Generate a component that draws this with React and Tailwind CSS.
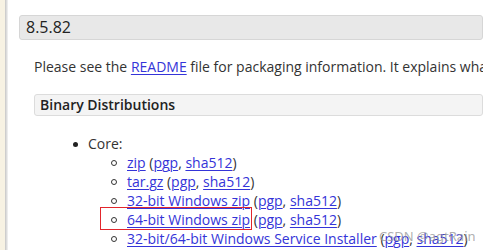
import React from "react";

const font = { fontFamily: '"Open Sans", "Noto Sans", sans-serif' };

function L({ children }) {
  return <a className="text-[#3434d8] underline underline-offset-[2px] decoration-[1px]">{children}</a>;
}

function Row({ children, boxed }) {
  return (
    <div className="relative flex items-center h-[19px]">
      <span className="shrink-0 w-[6px] h-[6px] rounded-full border border-[#333] ml-[111px] mr-[10px] mt-[1px]" />
      <span className="whitespace-nowrap">{children}</span>
      {boxed && (
        <span className="absolute left-[100px] top-[-3px] w-[152px] h-[23px] border-[1.5px] border-[#e2262c]" />
      )}
    </div>
  );
}

export default function App() {
  return (
    <div className="w-[484px] h-[250px] overflow-hidden bg-white flex text-[#333]" style={font}>
      <div className="shrink-0 w-[5px] bg-[#f7f2e3]" />
      <div className="shrink-0 w-[1px] bg-[#cdcdcd]" />
      <div className="shrink-0 w-[1px] bg-[#dcdcdc]" />
      <div className="shrink-0 w-[1px] bg-[#ececec]" />
      <div className="flex-1 min-w-0 relative pl-[11px] pr-[1px] pt-[15px]">
        <div className="h-[25px] bg-[#e8e8e8] border border-[#d6d6d6] rounded-[3px] px-[6px] text-[16px] leading-[23px] text-[#222]">
          8.5.82
        </div>
        <div className="pl-[15px] mt-[17px] text-[14px] leading-[20px] whitespace-nowrap overflow-hidden">
          Please see the <L>README</L> file for packaging information. It explains what every distribution contains.
        </div>
        <div className="ml-[15px] mt-[17px] h-[22px] bg-[#f4f4f4] border border-[#dcdcdc] rounded-[3px] px-[5px] text-[14px] leading-[20px] font-semibold text-[#222]">
          Binary Distributions
        </div>
        <div className="mt-[18px] text-[14px] -ml-[19px]">
          <div className="flex items-center h-[19px]">
            <span className="shrink-0 w-[5px] h-[5px] rounded-full bg-[#222] ml-[73px] mr-[10px] mt-[1px]" />
            <span>Core:</span>
          </div>
          <Row>
            <L>zip</L> (<L>pgp</L>, <L>sha512</L>)
          </Row>
          <Row>
            <L>tar.gz</L> (<L>pgp</L>, <L>sha512</L>)
          </Row>
          <Row>
            <L>32-bit Windows zip</L> (<L>pgp</L>, <L>sha512</L>)
          </Row>
          <Row boxed>
            <L>64-bit Windows zip</L> (<L>pgp</L>, <L>sha512</L>)
          </Row>
          <Row>
            <L>32-bit/64-bit Windows Service Installer</L> (<L>pgp</L>, <L>sha512</L>)
          </Row>
        </div>
        <div className="absolute left-[371px] top-[229px] text-[13px] leading-[14px] text-[#9a9a9a]/80 whitespace-nowrap" style={{ fontFamily: '"Noto Sans", sans-serif' }}>
          CSDN @agtRain
        </div>
      </div>
    </div>
  );
}
